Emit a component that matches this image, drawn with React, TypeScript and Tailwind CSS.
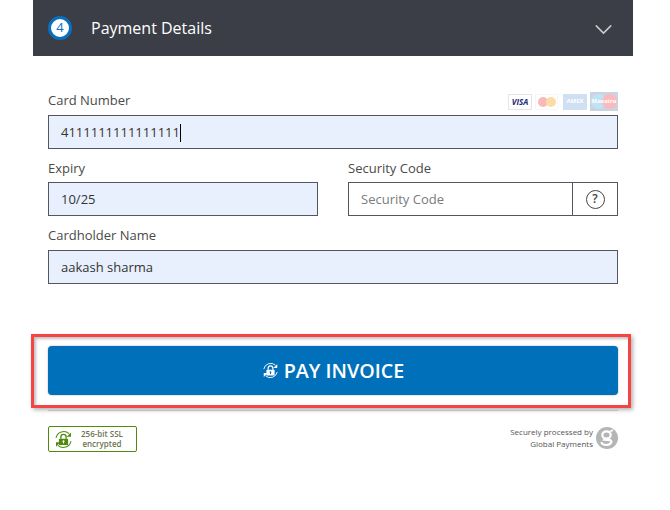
import { ChevronDown } from "lucide-react";

const font = "font-['Open_Sans',sans-serif]";

function LockBadge({ color, size }: { color: string; size: number }) {
  return (
    <svg width={size} height={size} viewBox="0 0 24 24" fill="none">
      <path d="M2.5 10A10 10 0 0 1 19 4.5" stroke={color} strokeWidth="1.3" />
      <path d="M21.5 14A10 10 0 0 1 5 19.5" stroke={color} strokeWidth="1.3" />
      <path d="M21.5 3v5.5H16z" fill={color} />
      <path d="M2.5 21v-5.5H8z" fill={color} />
      <path d="M8.7 11V8.8a3.3 3.3 0 0 1 6.6 0V11" stroke={color} strokeWidth="1.7" />
      <path
        fillRule="evenodd"
        d="M7 11h10a.8.8 0 0 1 .8.8v6.4a.8.8 0 0 1-.8.8H7a.8.8 0 0 1-.8-.8v-6.4A.8.8 0 0 1 7 11zm5 2a1.3 1.3 0 0 0-.7 2.4V17h1.4v-1.6A1.3 1.3 0 0 0 12 13z"
        fill={color}
      />
    </svg>
  );
}

function GlobalLogo() {
  return (
    <svg width="22" height="22" viewBox="0 0 22 22">
      <circle cx="11" cy="11" r="11" fill="#b5b5b5" />
      <ellipse cx="10.5" cy="8" rx="4.2" ry="3.6" fill="none" stroke="#fff" strokeWidth="2.2" />
      <path d="M14 4.5l3-1.5" stroke="#fff" strokeWidth="1.8" />
      <path d="M7 12.5c1 1 7-.3 8 1.2 1.3 2-1.5 4.3-4.5 4.3s-5.3-1.2-4.8-3" fill="none" stroke="#fff" strokeWidth="2.2" />
    </svg>
  );
}

function Field({ label, value, className }: { label: string; value: string; className?: string }) {
  return (
    <div className={className}>
      <div className="text-[13px] leading-[18px] text-[#4a4a4a]">{label}</div>
      <div className="mt-[5px] flex h-[34px] items-center border border-[#53565f] bg-[#e8f0fe] px-3 pt-px text-[13px] text-[#333]">
        {value}
      </div>
    </div>
  );
}

export default function App() {
  return (
    <div className={`h-[510px] w-[670px] overflow-hidden bg-white ${font}`}>
      <div className="mx-[33px] w-[600px]">
        <div className="flex h-[56px] items-center bg-[#3b3e46] pl-[15px] pr-[15px]">
          <div className="flex h-[24px] w-[24px] items-center justify-center rounded-full border-[3px] border-[#0a70bd] bg-white text-[13px] text-[#0a70bd]">
            4
          </div>
          <div className="ml-[19px] flex-1 text-[16px] text-white">Payment Details</div>
          <ChevronDown className="mt-[2px] h-[29px] w-[29px] text-[#c9cbd0]" strokeWidth={1.3} />
        </div>

        <div className="px-[15px]">
          <div className="mt-[35px] flex h-[24px] items-start justify-between">
            <div className="text-[13px] leading-[18px] text-[#4a4a4a]">Card Number</div>
            <div className="mt-[1px] flex items-center">
              <div className="flex h-[16px] w-[24px] items-center justify-center border border-[#e5e5e5] text-[8px] font-bold italic text-[#1a2a75]">
                VISA
              </div>
              <div className="ml-[3px] flex h-[16px] w-[23px] items-center justify-center border border-[#f7f7f7]">
                <div className="h-[10px] w-[10px] rounded-full bg-[#f9b9b9]" />
                <div className="ml-[-2px] h-[10px] w-[10px] rounded-full bg-[#fbdca6]" />
              </div>
              <div className="ml-[5px] flex h-[16px] w-[24px] items-center justify-center bg-[#cfe0f3] text-[6px] font-bold text-white">
                AMEX
              </div>
              <div className="relative ml-[3px] flex h-[19px] w-[28px] items-center justify-center bg-[#c9d3e2]">
                <div className="h-[15px] w-[15px] rounded-full bg-[#bfe3f5]" />
                <div className="ml-[-4px] h-[15px] w-[15px] rounded-full bg-[#fbb9be]" />
                <div className="absolute text-[6px] font-bold text-white">Maestro</div>
              </div>
            </div>
          </div>
          <div className="flex h-[34px] items-center border border-[#53565f] bg-[#e8f0fe] px-3 pt-px text-[13px] text-[#333]">
            4111111111111111
            <span className="h-[18px] w-px bg-black" />
          </div>

          <div className="mt-[10px] flex">
            <Field label="Expiry" value="10/25" className="w-[270px]" />
            <div className="ml-[30px] w-[270px]">
              <div className="text-[13px] leading-[18px] text-[#4a4a4a]">Security Code</div>
              <div className="mt-[5px] flex h-[34px] border border-r-0 border-[#53565f]">
                <div className="flex flex-1 items-center px-3 pt-px text-[13px] text-[#7b7b7b]">Security Code</div>
                <div className="flex w-[46px] items-center justify-center border-x border-[#53565f]">
                  <div className="flex h-[19px] w-[19px] items-center justify-center rounded-full border border-[#444] text-[12px] font-semibold text-[#444]">
                    ?
                  </div>
                </div>
              </div>
            </div>
          </div>

          <Field label="Cardholder Name" value="aakash sharma" className="mt-[10px] [&>div:last-child]:mt-[6px]" />
        </div>

        <div className="ml-[-2px] mt-[50px] w-[600px] border-[3px] border-[#f44444] pb-[10px] pl-[14px] pr-[10px] pt-[9px] shadow-[inset_2px_2px_3px_rgba(0,0,0,0.25),2px_2px_4px_rgba(0,0,0,0.3)]">
          <div className="flex h-[49px] items-center justify-center gap-[5px] rounded-[4px] bg-[#0070ba] text-[19.7px] font-semibold text-white shadow-[0_0_2px_rgba(0,0,0,0.35)]">
            <LockBadge color="#ffffff" size={17} />
            PAY INVOICE
          </div>
        </div>
        <div className="mx-[15px] mt-[2px] h-px bg-[#bdbdbd]" />

        <div className="mt-[15px] flex items-start justify-between px-[15px]">
          <div className="flex h-[26px] w-[89px] items-center rounded-[2px] border border-[#4d8a0f] pl-[5px] pr-[5px]">
            <LockBadge color="#4d8a0f" size={19} />
            <div className="flex-1 text-center text-[8px] font-semibold leading-[10px] text-[#6b7550]">
              256-bit SSL
              <br />
              encrypted
            </div>
          </div>
          <div className="flex items-center gap-[3px]">
            <div className="text-right text-[8px] leading-[12px] text-[#555]">
              Securely processed by
              <br />
              Global Payments
            </div>
            <GlobalLogo />
          </div>
        </div>
      </div>
    </div>
  );
}
